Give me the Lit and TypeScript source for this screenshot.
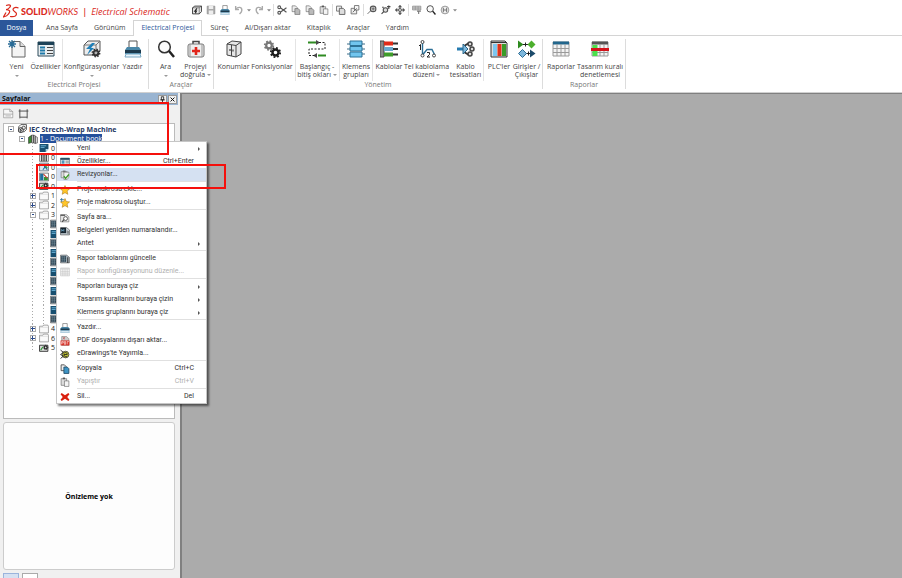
import { LitElement, html, svg, css, nothing, TemplateResult } from "lit";
import { customElement, property } from "lit/decorators.js";
import { classMap } from "lit/directives/class-map.js";

/* Glyphs are drawn on an 18-unit grid. */
const page = svg`<path d="M4 1.500h8l5 5V17H4z" fill="#f4f4f4" stroke="#666"/><path d="M12 1.500v5h5" fill="#ddd" stroke="#666"/>`;
const printer = svg`<path d="M5 1h8v7H5z" fill="#fff" stroke="#555"/><path d="M1 10l2-3h12l2 3v4H1z" fill="#4a87a8"/><path d="M1 10h16v3H1z" fill="#1d3a4d"/><path d="M2 14h14l1 3H1z" fill="#e8f4fb" stroke="#78a8c4"/>`;
const star = svg`<path d="M9 1l2.400 5.400 5.800.6-4.400 3.900 1.300 5.900L9 13.800l-5.100 3 1.300-5.900L.8 7l5.800-.6z" fill="#ffc629" stroke="#a8781b"/>`;
const gridPic = (head: string, line: string) => svg`<path d="M1 2h16v14H1z" fill="#f3f3f3" stroke="${line}"/><path d="M1 1.500h16v3H1z" fill="${head}"/><path d="M1 8.500h16M1 12.500h16M5 4v12M9 4v12M13 4v12" stroke="${line}"/>`;
const gear = (x: number, y: number, r: number, c: string) => svg`<circle cx="${x}" cy="${y}" r="${r}" fill="none" stroke="${c}" stroke-width="${r * 0.8}"/><circle cx="${x}" cy="${y}" r="${r * 1.55}" fill="none" stroke="${c}" stroke-width="${r * 0.6}" stroke-dasharray="${r * 0.61} ${r * 0.607}"/>`;
const twoPages = (c: string, f: string) => svg`<path d="M2 1.500h6l3 3V12H2z" fill="#eee" stroke="${c}"/><path d="M7 6.500h6l3 3V17H7z" fill="${f}" stroke="${c}"/>`;

const icons: Record<string, TemplateResult> = {
  newPage: svg`${page}<path d="M4 0v8M0 4h8M1 1l6 6M7 1L1 7" stroke="#286b96" stroke-width="1.300"/>`,
  props: svg`<path d="M1 2h16v14H1z" fill="#e9eef0" stroke="#2c4a5a"/><path d="M1 2h16v3H1z" fill="#1d4257"/><path d="M3 7.500h5M3 10.500h5M3 13.500h5" stroke="#1d78a8" stroke-width="2"/><path d="M10 7.500h6M10 10.500h6M10 13.500h6" stroke="#444"/>`,
  config: svg`<path d="M1 5l4-4h12v10l-4 4H1z" fill="#ececec" stroke="#555"/><path d="M1 5h12v10M13 5l4-4" fill="none" stroke="#777"/><path d="M9 3L3 9h4l-3 6 7-7H8l4-5z" fill="#1e7fb8"/>${gear(13, 13, 2.4, "#333")}`,
  printer,
  search: svg`<circle cx="7.500" cy="7" r="5.800" fill="#fafafa" stroke="#333" stroke-width="1.500"/><path d="M12 11l5 6" stroke="#222" stroke-width="2.500"/>`,
  aid: svg`<path d="M6 4V1.500h6V4" fill="none" stroke="#444" stroke-width="1.500"/><rect x="1" y="4" width="16" height="13" rx="2" fill="#eee" stroke="#777"/><path d="M3 4v13M15 4v13" stroke="#999"/><path d="M9 7v8M5 11h8" stroke="#e1251b" stroke-width="2.600"/>`,
  places: svg`<path d="M2 4l5-3 9 1v12l-5 3-9-2z" fill="#e6e6e6" stroke="#444"/><path d="M2 4l9 1.500V17M11 5.500L16 2M6.500 5v11" fill="none" stroke="#444"/><path d="M5 9v2M8 9.500v2" stroke="#222"/>`,
  gears: svg`${gear(6, 5.5, 2.8, "#777")}${gear(12.5, 12.5, 3, "#1c1c1c")}`,
  arrows: svg`<path d="M0 2.500h8M10 15.500h8" stroke="#2f8b22" stroke-width="2"/><path d="M8 0l4 2.500L8 5zM9 13l-4 2.500L9 18z" fill="#4a4a4a"/><path d="M11 2.500h6v6.500H1v6.500h6" fill="none" stroke="#222" stroke-dasharray="2 1.500"/>`,
  terminals: svg`<path d="M0 4h18M0 9h18M0 14h18" stroke="#3a6d88"/><path d="M3 1h12v4.500H3zM3 6.500h12v4.500H3zM3 12h12v5H3z" fill="#71c5ee" stroke="#2d7195"/>`,
  cables: svg`<path d="M0 1h4v16H0z" fill="#8a8a8a" stroke="#444"/><path d="M4 3.500h9" stroke="#e02b18" stroke-width="4"/><path d="M4 9h9" stroke="#6aa9cf" stroke-width="4"/><path d="M4 14.500h9" stroke="#3f9c2a" stroke-width="4"/><path d="M13 3.500h5M13 9h5M13 14.500h5" stroke="#333" stroke-width="2"/>`,
  wiring: svg`<path d="M4.500 2v13L9 9.500h5l2.500 5" fill="none" stroke="#2c6f96" stroke-width="1.400"/><circle cx="4.500" cy="2" r="1.500" fill="#fff" stroke="#444"/><circle cx="4.500" cy="15.500" r="1.500" fill="#fff" stroke="#444"/><circle cx="16" cy="15.500" r="1.500" fill="#fff" stroke="#444"/><path d="M1 6l1.500-1.500V10M9 12.500h2.500v2L9 17h3" fill="none" stroke="#222"/>`,
  harness: svg`<path d="M0 9h9" stroke="#257bb0" stroke-width="3"/><path d="M7 6l5-3M7 12l5 3" stroke="#333" stroke-width="2"/><path d="M6 4l5 5-5 5z" fill="#7db7dc" stroke="#2b6688"/><circle cx="13" cy="4" r="2" fill="#ddd" stroke="#444" stroke-width="1.500"/><circle cx="15" cy="9" r="2" fill="#ddd" stroke="#444" stroke-width="1.500"/><circle cx="13" cy="14" r="2" fill="#ddd" stroke="#444" stroke-width="1.500"/>`,
  plc: svg`<path d="M1 1h14l2 2v14H1z" fill="#ddd" stroke="#333"/><path d="M3 4h4v12H3z" fill="#7cc6ee"/><path d="M7.500 4h4v12h-4z" fill="#e03218"/><path d="M12 4h4v12h-4z" fill="#3a9b28"/><path d="M1 2.500h15" stroke="#333"/>`,
  io: svg`<path d="M0 .5l5.500 4L0 8.500z" fill="#2d8a1e"/><path d="M5 4.500h5M7.500 2.500v4M8 13.500h5M10.500 11.500v4" stroke="#222"/><path d="M13.500 .5l4 4-4 4-4-4z" fill="#4caf2d"/><path d="M4.500 9.500l4 4-4 4-4-4z" fill="#7db7dc" stroke="#2d6c94"/><path d="M12 9.500l5.500 4-5.500 4z" fill="#1c4b6b"/>`,
  table: gridPic("#22668c", "#9a9a9a"),
  rules: svg`${gridPic("#555", "#999")}<path d="M1.500 5h5v11h-5z" fill="#4be04b"/><path d="M0 8h18v3H0z" fill="#d3131b"/>`,
  /* quick access and context menu */
  cube: svg`<path d="M1 5l4-3h12v10l-4 4H1z" fill="#eee" stroke="#222" stroke-width="1.500"/><path d="M1 5h12v11M13 5l4-3" fill="none" stroke="#333"/><path d="M9 6l-4 5h3l-2 4" fill="none" stroke="#222" stroke-width="2"/>`,
  project: svg`<path d="M3 5l4-4h10v9l-4 4H3z" fill="#f2f2f2" stroke="#444" stroke-width="1.500"/><circle cx="7" cy="11" r="4.500" fill="#ddd" stroke="#333" stroke-width="1.500"/><circle cx="12" cy="7" r="3" fill="none" stroke="#444" stroke-width="1.500"/><path d="M8 8l-3 3h3l-2 4" fill="none" stroke="#222" stroke-width="1.500"/>`,
  save: svg`<path d="M2 2h14v14H2z" fill="#aaa" stroke="#888"/><path d="M5 2h8v5H5zM5 10h8v6H5z" fill="#eee"/>`,
  undo: svg`<path d="M3 2v6h6" fill="none" stroke="#aaa" stroke-width="2.500"/><path d="M4 7c3-4 11-4 10 3-.5 3-2 4-4 6" fill="none" stroke="#aaa" stroke-width="2.500"/>`,
  redo: svg`<path d="M15 2v6H9" fill="none" stroke="#aaa" stroke-width="2.500"/><path d="M14 7C11 3 3 3 4 10c.5 3 2 4 4 6" fill="none" stroke="#aaa" stroke-width="2.500"/>`,
  cut: svg`<path d="M6 5l11 8M6 13l11-8" stroke="#555" stroke-width="2"/><circle cx="4" cy="4" r="2.500" fill="none" stroke="#555" stroke-width="2"/><circle cx="4" cy="14" r="2.500" fill="none" stroke="#555" stroke-width="2"/>`,
  copyGray: twoPages("#555", "#bbb"),
  paste: svg`<path d="M2 3h10v12H2z" fill="#ddd" stroke="#555"/><path d="M5 1h4v3H5z" fill="#555"/><path d="M8 7h8v10H8z" fill="#f4f4f4" stroke="#555"/>`,
  duplicate: svg`<path d="M1 2h9v9H1z" fill="#f4f4f4" stroke="#666" stroke-width="1.500"/><path d="M6 6h7l3 3v8H6z" fill="#ddd" stroke="#555" stroke-width="1.500"/>`,
  detach: svg`<path d="M2 6h10v10H2z" fill="#eee" stroke="#666" stroke-width="1.500"/><path d="M8 1h8v8H8z" fill="#f8f8f8" stroke="#666" stroke-width="1.500"/><path d="M5 13l7-7" stroke="#555" stroke-width="1.500"/>`,
  zoomFit: svg`<circle cx="11" cy="7" r="5" fill="#ddd" stroke="#555" stroke-width="2"/><path d="M7 10l-6 6M8 7h6M11 4v6" stroke="#555" stroke-width="1.500"/>`,
  zoomArea: svg`<circle cx="8" cy="9" r="4" fill="#ddd" stroke="#555" stroke-width="2"/><path d="M5 12l-4 4M11 3h6M14 1v6M2 4h3" stroke="#444" stroke-width="2"/>`,
  pan: svg`<path d="M9 1v16M1 9h16" stroke="#444" stroke-width="2"/><path d="M9 0l4 4H5zM9 18l4-4H5zM0 9l4-4v8zM18 9l-4-4v8z" fill="#555"/><circle cx="9" cy="9" r="3" fill="#bbb" stroke="#444"/>`,
  filter: svg`<path d="M1 2h15v7H1z" fill="#ccc" stroke="#777"/><path d="M1 5.500h15M6 2v7M11 2v7" stroke="#888"/><path d="M9 11h7M12 11v5" stroke="#777" stroke-width="2"/>`,
  help: svg`<circle cx="9" cy="9" r="7" fill="#eee" stroke="#888" stroke-width="1.500"/><path d="M6 5v8M12 5v8M6 9h6" stroke="#666" stroke-width="1.600"/>`,
  revise: svg`<path d="M2 3h11v11H2z" fill="#ddd" stroke="#666"/><path d="M5 1h5v3H5z" fill="#777"/><path d="M7 4h9v9l-3 4H7z" fill="#f3f3f3" stroke="#666"/><path d="M7 11l3 4 6-7" fill="none" stroke="#3f9c2a" stroke-width="2.500"/>`,
  star,
  starNew: svg`${star}<path d="M3 0v7M0 3h7" stroke="#286b96" stroke-width="1.500"/>`,
  findPage: svg`<path d="M1 3h11l4 4v9H1z" fill="#e6e6e6" stroke="#666"/><path d="M1 4h8" stroke="#444" stroke-width="2"/><circle cx="10" cy="10" r="3.500" fill="#fff" stroke="#444" stroke-width="1.500"/><path d="M7 12l-3 4" stroke="#444" stroke-width="2"/>`,
  renumber: svg`<path d="M1 3h11l5 4v9H1z" fill="#cfd8de" stroke="#333"/><path d="M1 3h10v10H1z" fill="#16242e"/><path d="M3 10V6l2 3 2-3v4" fill="none" stroke="#8ccdf0"/><path d="M13 8v6M15 9v5" stroke="#333"/>`,
  report: svg`<path d="M1 2h11l5 4v10H1z" fill="#aebbc4" stroke="#444"/><path d="M2 4h9v10H2z" fill="#1f3543"/><path d="M2 7h9M2 10.500h9M5 4v10M8 4v10" stroke="#7f98a6"/><path d="M14 6v10" stroke="#333" stroke-width="2"/>`,
  tableGray: gridPic("#d4d4d4", "#c2c2c2"),
  pdf: svg`<path d="M3 1h9l4 4v12H3z" fill="#ccc" stroke="#777"/><path d="M1 8h16v9H1z" fill="#d8342a"/><path d="M3 15v-5h3v2.500H3M8 10v5h2v-5zM13 15v-5h3" fill="none" stroke="#fff"/><path d="M5 2l4 4M9 2L5 6" stroke="#b33"/>`,
  edraw: svg`<circle cx="10" cy="10" r="6" fill="#c4c832" stroke="#444" stroke-width="1.500"/><path d="M1 2l5 4-5 4 5 3-5 4M7 10h6M7 8c2-3 6-2 6 2M7 10c0 4 4 5 6 3" fill="none" stroke="#222" stroke-width="1.600"/>`,
  copy: svg`<path d="M2 1.500h6l3 3V12H2z" fill="#eee" stroke="#444" stroke-width="1.500"/><path d="M7 5.500h6l3 3V17H7z" fill="#3f94c4" stroke="#1e4a66" stroke-width="1.500"/>`,
  del: svg`<path d="M3 2l6 4 6-4 2 2-4 5 4 5-2 2-6-4-6 4-2-2 4-5-4-5z" fill="#d9200f"/>`,
  /* sheets and tree */
  sheet: svg`<path d="M1 2h10l5 4v10H1z" fill="#f8f8f8" stroke="#888"/><path d="M1 10h15M4 13h9M11 2v4h5" fill="none" stroke="#888"/>`,
  frame: svg`<path d="M3 5h12v10H3z" fill="none" stroke="#444" stroke-width="1.500"/><path d="M3 2v3M15 2v3M1 5h2M15 5h2M3 15v2M15 15v2" stroke="#444" stroke-width="1.500"/>`,
  book: svg`<path d="M1 6l6-4v13l-6 2z" fill="#3c8a33" stroke="#222"/><path d="M7 2h3v14H7zM10 2l3 1v14l-3-1zM13 4l4 2v10l-4 1z" fill="#ddd" stroke="#333"/>`,
  blueSheet: svg`<path d="M1 2h16v9l-5 5H1z" fill="#174f70"/><path d="M3 5h10M3 8h7" stroke="#76c2e8" stroke-width="1.500"/><path d="M12 11h5l-5 5z" fill="#b8d8e8"/>`,
  cabinetDoc: svg`<path d="M1 3h16v12H1z" fill="#eee" stroke="#333"/><path d="M5 3v12M9 3v12M13 3v12" stroke="#222" stroke-width="2"/>`,
  schemeDoc: svg`<path d="M1 2h16v14H1z" fill="#dceaf2" stroke="#234"/><path d="M4 5h6v5M7 14l4-5 4 5" fill="none" stroke="#256e9c" stroke-width="2"/><path d="M9 4l6 7" stroke="#2f9636" stroke-width="2"/>`,
  mixedDoc: svg`<path d="M1 2h16v14H1z" fill="#fff" stroke="#222"/><path d="M2 3h6v12H2z" fill="#1f6f9c"/><path d="M9 9h7v6H9z" fill="#2f9636"/><path d="M8 4l7 7" stroke="#c63826" stroke-width="2"/>`,
  gearDoc: svg`<path d="M1 4h15v11H1z" fill="#ddd" stroke="#222" stroke-width="1.500"/>${gear(12, 8, 2.5, "#222")}<path d="M3 13l4-6" stroke="#2f9636" stroke-width="2"/>`,
  folder: svg`<path d="M1 16V4h6l1-2h8l1 2v12z" fill="#fafafa" stroke="#666"/><path d="M2 6h14" stroke="#ccc"/>`,
  pin: svg`<path d="M6 2h6v8H6zM3 10h12M9 10v7" fill="none" stroke="#111" stroke-width="2"/>`,
  close: svg`<path d="M4 4l10 10M14 4L4 14" stroke="#111" stroke-width="2.500"/>`,
};

const icon = (name: string, cls: string) =>
  html`<svg class=${cls} viewBox="0 0 18 18" aria-hidden="true">${icons[name]}</svg>`;

type Tool = { icon: string; label: string[]; drop?: boolean } | "|";
interface Group { cls: string; title: string; tools: Tool[] }

@customElement("app-ribbon")
export class AppRibbon extends LitElement {
  static styles = css`
    :host { display: block; background: #fff; font: 7px/8px "Open Sans", sans-serif; color: #444; }
    button { font: inherit; color: inherit; background: none; border: 0; padding: 0; margin: 0; white-space: nowrap; }
    .title { display: flex; align-items: center; height: 20px; }
    .brand { display: flex; align-items: center; width: 192px; color: #da291c; line-height: 16px; white-space: nowrap; padding-top: 3px; box-sizing: border-box; }
    .mark { width: 17px; height: 16px; margin: 0 1px 0 3px; }
    .name { font-family: Lato, sans-serif; font-size: 9px; font-style: italic; }
    .name b { font-weight: 900; font-style: normal; }
    .bar { margin: 0 4px; font-size: 9px; font-weight: 600; }
    .product { font-size: 9px; font-style: italic; font-weight: 500; }
    .quick { display: flex; align-items: center; gap: 4px; }
    .quick button, .quick svg { display: block; width: 10px; height: 10px; }
    .quick .small { width: 4px; margin: 0 -1px; }
    .quick svg.small { margin: 0; }
    .rule { width: 1px; height: 12px; background: #ddd; margin: 0 -1px; }
    nav { display: flex; height: 16px; border-bottom: 1px solid #d4d4d4; box-sizing: border-box; }
    nav button { padding: 0 8px; height: 16px; }
    nav .file { background: #2b579a; color: #fff; width: 33px; padding: 0; margin-right: 5px; }
    nav .on { background: #fff; color: #2b579a; border: 1px solid #d4d4d4; border-bottom: 0; padding: 0 7px 1px; }
    .groups { display: flex; height: 57px; border-bottom: 1px solid #d0d0d0; box-sizing: border-box; }
    section { display: flex; flex-direction: column; justify-content: space-between; border-right: 1px solid #dcdcdc; margin: 3px 0; padding: 0 2px; }
    .tools { display: grid; height: 42px; }
    .project { grid-template-columns: 29px 29px 4px 55px 27px; }
    .find { grid-template-columns: 29px 31px; }
    .manage { grid-template-columns: 35px 42px 4px 40px 4px 30px 3px 30px 45px 33px 3px 28px 27px; }
    .reports { grid-template-columns: 32px 46px; }
    .tool { display: flex; flex-direction: column; align-items: center; }
    .big { width: 18px; height: 18px; margin: 1px 0 5px; flex: none; }
    .tool span { display: block; text-align: center; }
    .drop { border: 2px solid transparent; border-top-color: #999; border-bottom: 0; width: 0; height: 0; display: inline-block; vertical-align: middle; }
    .tool > .drop { margin-top: 4px; }
    .split { background: #e4e4e4; width: 1px; justify-self: center; }
    h2 { font: inherit; color: #777; margin: 0; text-align: center; height: 8px; }
  `;

  private tabs = ["Ana Sayfa", "Görünüm", "Electrical Projesi", "Süreç", "Al/Dışarı aktar", "Kitaplık", "Araçlar", "Yardım"];
  private quick = ["cube", "save", "printer", "undo", "v", "redo", "v", "|", "cut", "copyGray", "copyGray", "paste", "|", "duplicate", "detach", "|", "zoomFit", "zoomArea", "pan", "|", "filter", "search", "help", "v"];
  private groups: Group[] = [
    { cls: "project", title: "Electrical Projesi", tools: [
      { icon: "newPage", label: ["Yeni"], drop: true }, { icon: "props", label: ["Özellikler"] }, "|",
      { icon: "config", label: ["Konfigürasyonlar"], drop: true }, { icon: "printer", label: ["Yazdır"] }] },
    { cls: "find", title: "Araçlar", tools: [
      { icon: "search", label: ["Ara"], drop: true }, { icon: "aid", label: ["Projeyi", "doğrula"], drop: true }] },
    { cls: "manage", title: "Yönetim", tools: [
      { icon: "places", label: ["Konumlar"] }, { icon: "gears", label: ["Fonksiyonlar"] }, "|",
      { icon: "arrows", label: ["Başlangıç -", "bitiş okları"], drop: true }, "|",
      { icon: "terminals", label: ["Klemens", "grupları"] }, "|",
      { icon: "cables", label: ["Kablolar"] }, { icon: "wiring", label: ["Tel kablolama", "düzeni"], drop: true },
      { icon: "harness", label: ["Kablo", "tesisatları"] }, "|",
      { icon: "plc", label: ["PLC'ler"] }, { icon: "io", label: ["Girişler /", "Çıkışlar"] }] },
    { cls: "reports", title: "Raporlar", tools: [
      { icon: "table", label: ["Raporlar"] }, { icon: "rules", label: ["Tasarım kuralı", "denetlemesi"] }] },
  ];

  private tool(t: Tool) {
    if (t === "|") return html`<i class="split"></i>`;
    const two = t.label.length > 1;
    return html`<button class="tool">${icon(t.icon, "big")}
      <span>${t.label[0]}</span>
      ${two ? html`<span>${t.label[1]}${t.drop ? html` <i class="drop"></i>` : nothing}</span>` : t.drop ? html`<i class="drop"></i>` : nothing}
    </button>`;
  }

  render() {
    return html`
      <div class="title">
        <div class="brand">
          <svg class="mark" viewBox="0 0 34 32" aria-hidden="true" fill="none" stroke="#da291c" stroke-width="2.500">
            <path d="M6 3c7-2 11-1 8 3-2 3-5 5-8 5 8 0 9 4 5 9-2 3-6 5-10 6l5-9"/>
            <path d="M31 8c-5-2-11-1-11 3 0 4 8 5 7 9-1 5-7 6-13 5"/>
          </svg>
          <span class="name"><b>SOLID</b>WORKS</span><span class="bar">|</span><span class="product">Electrical Schematic</span>
        </div>
        <div class="quick">
          ${this.quick.map((q) => q === "|" ? html`<i class="rule"></i>`
            : q === "v" ? html`<button class="small" aria-label="Daha fazla"><svg class="small" viewBox="0 0 5 10"><path d="M0 4h5L2.500 7z" fill="#888"/></svg></button>`
            : html`<button aria-label=${q}>${icon(q, "")}</button>`)}
        </div>
      </div>
      <nav>
        <button class="file">Dosya</button>
        ${this.tabs.map((t) => html`<button class=${classMap({ on: t === "Electrical Projesi" })}>${t}</button>`)}
      </nav>
      <div class="groups">
        ${this.groups.map((g) => html`<section><div class="tools ${g.cls}">${g.tools.map((t) => this.tool(t))}</div><h2>${g.title}</h2></section>`)}
      </div>`;
  }
}

interface Node { level: number; icon: string; text: string; box?: "+" | "-" }

@customElement("page-tree")
export class PageTree extends LitElement {
  static styles = css`
    :host { display: block; font: 7px/9px "Open Sans", sans-serif; color: #222; }
    ul { list-style: none; margin: 0; padding: 0 0 0 1px; display: grid; grid-template-rows: repeat(12, 10px 9px); }
    li { display: flex; align-items: center; white-space: nowrap; }
    .guide { width: 11px; align-self: stretch; flex: none; display: grid; place-items: center; }
    .line { background: repeating-linear-gradient(#aaa 0 1px, transparent 1px 3px) center / 1px 100% no-repeat; }
    .box { width: 4px; height: 4px; border: 1px solid #aaa; background: linear-gradient(#2b4a8a, #2b4a8a) center / 2px 1px no-repeat #fff; }
    .plus { background: linear-gradient(#2b4a8a, #2b4a8a) center / 4px 1px no-repeat, linear-gradient(#2b4a8a, #2b4a8a) center / 1px 4px no-repeat #fff; }
    .pic { width: 10px; height: 10px; margin: 0 2px 0 1px; flex: none; }
    .root { font-weight: 700; color: #1f3864; }
    .sel { background: #24509b; color: #fff; }
  `;

  private nodes: Node[] = [
    { level: 0, icon: "project", text: "IEC Strech-Wrap Machine", box: "-" },
    { level: 1, icon: "book", text: "1 - Document book", box: "-" },
    ...["blueSheet", "cabinetDoc", "schemeDoc", "mixedDoc", "gearDoc"].map((i) => ({ level: 2, icon: i, text: "0" })),
    { level: 2, icon: "folder", text: "1", box: "+" },
    { level: 2, icon: "folder", text: "2", box: "+" },
    { level: 2, icon: "folder", text: "3", box: "-" },
    ...Array.from({ length: 11 }, (_, i) => ({ level: 3, icon: i % 2 ? "blueSheet" : "report", text: "" })),
    { level: 2, icon: "folder", text: "4", box: "+" },
    { level: 2, icon: "folder", text: "6", box: "+" },
    { level: 2, icon: "gearDoc", text: "5" },
  ];

  render() {
    return html`<ul>
      ${this.nodes.map((n) => html`<li>
        ${Array.from({ length: n.level }, (_, i) => html`<i class="guide ${i > 1 ? "line" : ""}"></i>`)}
        <i class="guide ${n.level > 1 ? "line" : ""}">${n.box ? html`<b class="box ${n.box === "+" ? "plus" : ""}"></b>` : nothing}</i>
        ${icon(n.icon, "pic")}
        <span class=${classMap({ root: n.level === 0, sel: n.level === 1 })}>${n.text}</span>
      </li>`)}
    </ul>`;
  }
}

interface Entry { text: string; icon?: string; key?: string; sub?: boolean; off?: boolean; hot?: boolean; rule?: boolean }

@customElement("context-menu")
export class ContextMenu extends LitElement {
  @property({ attribute: false }) entries: Entry[] = [
    { text: "Yeni", sub: true },
    { text: "Özellikler...", icon: "props", key: "Ctrl+Enter" },
    { text: "Revizyonlar...", icon: "revise", hot: true },
    { text: "Proje makrosu ekle...", icon: "star", rule: true },
    { text: "Proje makrosu oluştur...", icon: "starNew" },
    { text: "Sayfa ara...", icon: "findPage", rule: true },
    { text: "Belgeleri yeniden numaralandır...", icon: "renumber" },
    { text: "Antet", sub: true },
    { text: "Rapor tablolarını güncelle", icon: "report", rule: true },
    { text: "Rapor konfigürasyonunu düzenle...", icon: "tableGray", off: true },
    { text: "Raporları buraya çiz", sub: true, rule: true },
    { text: "Tasarım kurallarını buraya çizin", sub: true },
    { text: "Klemens gruplarını buraya çiz", sub: true },
    { text: "Yazdır...", icon: "printer", rule: true },
    { text: "PDF dosyalarını dışarı aktar...", icon: "pdf" },
    { text: "eDrawings'te Yayımla...", icon: "edraw" },
    { text: "Kopyala", icon: "copy", key: "Ctrl+C", rule: true },
    { text: "Yapıştır", icon: "paste", key: "Ctrl+V", off: true },
    { text: "Sil...", icon: "del", key: "Del", rule: true },
  ];

  static styles = css`
    :host { display: block; box-sizing: border-box; width: 151px; border: 1px solid #c6c6c6; background: #fff; box-shadow: 2px 2px 2px #0008; font: 7px/13px Roboto, sans-serif; color: #333; }
    button { display: flex; align-items: center; width: 100%; height: 13px; padding: 0 12px 0 3px; border: 0; background: none; font: inherit; color: inherit; text-align: left; white-space: nowrap; }
    .cell { display: flex; width: 17px; flex: none; }
    .pic { width: 10px; height: 10px; }
    .text { flex: 1; }
    .hot { background: #d5e1f2; }
    .off { color: #b0b0b0; }
    .rule { height: 1px; margin: 0 0 1px 20px; background: #e0e0e0; }
    .sub { width: 0; height: 0; margin-right: -6px; border: 2px solid transparent; border-left-color: #555; border-right: 0; }
  `;

  render() {
    return html`${this.entries.map((e) => html`
      ${e.rule ? html`<div class="rule"></div>` : nothing}
      <button class=${classMap({ hot: !!e.hot, off: !!e.off })} ?disabled=${!!e.off}>
        <span class="cell">${e.icon ? icon(e.icon, "pic") : nothing}</span>
        <span class="text">${e.text}</span>
        ${e.key ? html`<span>${e.key}</span>` : nothing}
        ${e.sub ? html`<i class="sub"></i>` : nothing}
      </button>`)}`;
  }
}

@customElement("app-root")
export class AppRoot extends LitElement {
  static styles = css`
    :host { display: flex; flex-direction: column; height: 100vh; overflow: hidden; position: relative; background: #ababab; font: 7px/9px "Open Sans", sans-serif; }
    .work { display: flex; flex: 1; min-height: 0; }
    aside { display: flex; flex-direction: column; width: 180px; box-sizing: border-box; background: #f0f0f0; }
    .edge { width: 2px; background: #808080; }
    main { flex: 1; background: #ababab; border-top: 1px solid #808080; }
    header { display: flex; align-items: center; gap: 1px; height: 12px; margin-right: 2px; padding: 0 1px 0 2px; background: #99b4d1; flex: none; }
    h1 { flex: 1; margin: 0; font: 700 7px/12px "Open Sans", sans-serif; color: #111; }
    header button { width: 9px; height: 9px; padding: 0; border: 1px solid #999; background: #f0f0f0; display: grid; place-items: center; }
    header svg { width: 7px; height: 7px; }
    .bar { display: flex; align-items: center; gap: 4px; height: 18px; box-sizing: border-box; padding: 0 3px 2px; flex: none; }
    .bar button { display: block; width: 11px; height: 11px; padding: 0; border: 0; background: none; }
    .bar svg { width: 11px; height: 11px; display: block; }
    .tree { flex: 1; min-height: 0; margin: 0 5px 0 3px; border: 1px solid #bbb; background: #fff; overflow: hidden; }
    .preview { display: grid; place-items: center; flex: none; height: 148px; box-sizing: border-box; margin: 3px 5px 3px 3px; border: 1px solid #ccc; border-radius: 3px; background: #fdfdfd; font-weight: 700; color: #000; }
    .tabs { display: flex; gap: 3px; height: 5px; padding-left: 3px; flex: none; overflow: hidden; }
    .tabs button { width: 16px; height: 12px; padding: 0; border: 1px solid #aaa; background: #fff; }
    .tabs .on { background: #d5e1f2; border-color: #9ab4dc; }
    context-menu { position: absolute; left: 56px; top: 141px; }
    .mark { position: absolute; box-sizing: border-box; border: 2px solid #f5100c; pointer-events: none; }
    .first { left: -2px; top: 102px; width: 171px; height: 53px; }
    .second { left: 36px; top: 164px; width: 190px; height: 25px; }
  `;

  render() {
    return html`
      <app-ribbon></app-ribbon>
      <div class="work">
        <aside>
          <header><h1>Sayfalar</h1><button aria-label="Sabitle">${icon("pin", "")}</button><button aria-label="Kapat">${icon("close", "")}</button></header>
          <div class="bar"><button aria-label="Sayfa">${icon("sheet", "")}</button><button aria-label="Çerçeve">${icon("frame", "")}</button></div>
          <div class="tree"><page-tree></page-tree></div>
          <div class="preview">Önizleme yok</div>
          <div class="tabs"><button class="on" aria-label="Sayfalar"></button><button aria-label="Bileşenler"></button></div>
        </aside>
        <div class="edge"></div>
        <main></main>
      </div>
      <context-menu></context-menu>
      <div class="mark first"></div>
      <div class="mark second"></div>`;
  }
}
